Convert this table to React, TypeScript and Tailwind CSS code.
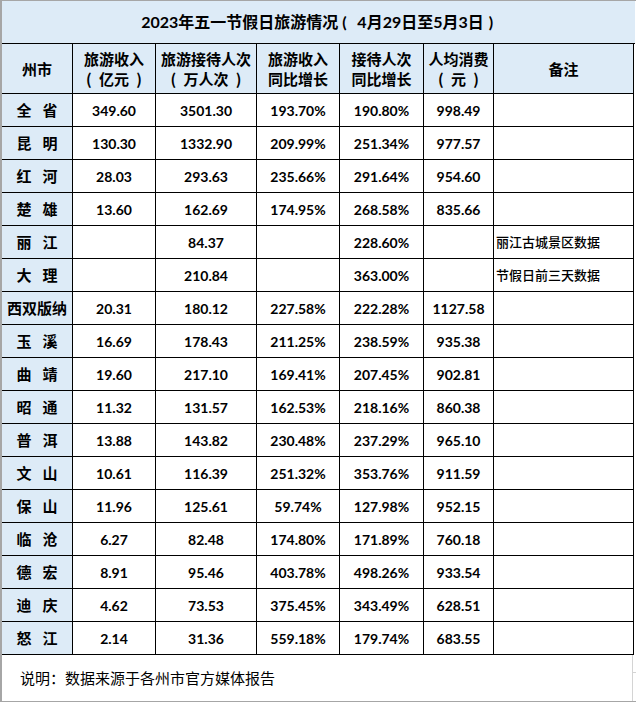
const COLS = "grid grid-cols-[71px_83px_101px_83px_84px_70px_140px]"

type Row = {
  city: string
  income: string
  visitors: string
  incomeYoY: string
  visitorsYoY: string
  perCapita: string
  note: string
}

const ROWS: Row[] = [
  { city: "全省", income: "349.60", visitors: "3501.30", incomeYoY: "193.70%", visitorsYoY: "190.80%", perCapita: "998.49", note: "" },
  { city: "昆明", income: "130.30", visitors: "1332.90", incomeYoY: "209.99%", visitorsYoY: "251.34%", perCapita: "977.57", note: "" },
  { city: "红河", income: "28.03", visitors: "293.63", incomeYoY: "235.66%", visitorsYoY: "291.64%", perCapita: "954.60", note: "" },
  { city: "楚雄", income: "13.60", visitors: "162.69", incomeYoY: "174.95%", visitorsYoY: "268.58%", perCapita: "835.66", note: "" },
  { city: "丽江", income: "", visitors: "84.37", incomeYoY: "", visitorsYoY: "228.60%", perCapita: "", note: "丽江古城景区数据" },
  { city: "大理", income: "", visitors: "210.84", incomeYoY: "", visitorsYoY: "363.00%", perCapita: "", note: "节假日前三天数据" },
  { city: "西双版纳", income: "20.31", visitors: "180.12", incomeYoY: "227.58%", visitorsYoY: "222.28%", perCapita: "1127.58", note: "" },
  { city: "玉溪", income: "16.69", visitors: "178.43", incomeYoY: "211.25%", visitorsYoY: "238.59%", perCapita: "935.38", note: "" },
  { city: "曲靖", income: "19.60", visitors: "217.10", incomeYoY: "169.41%", visitorsYoY: "207.45%", perCapita: "902.81", note: "" },
  { city: "昭通", income: "11.32", visitors: "131.57", incomeYoY: "162.53%", visitorsYoY: "218.16%", perCapita: "860.38", note: "" },
  { city: "普洱", income: "13.88", visitors: "143.82", incomeYoY: "230.48%", visitorsYoY: "237.29%", perCapita: "965.10", note: "" },
  { city: "文山", income: "10.61", visitors: "116.39", incomeYoY: "251.32%", visitorsYoY: "353.76%", perCapita: "911.59", note: "" },
  { city: "保山", income: "11.96", visitors: "125.61", incomeYoY: "59.74%", visitorsYoY: "127.98%", perCapita: "952.15", note: "" },
  { city: "临沧", income: "6.27", visitors: "82.48", incomeYoY: "174.80%", visitorsYoY: "171.89%", perCapita: "760.18", note: "" },
  { city: "德宏", income: "8.91", visitors: "95.46", incomeYoY: "403.78%", visitorsYoY: "498.26%", perCapita: "933.54", note: "" },
  { city: "迪庆", income: "4.62", visitors: "73.53", incomeYoY: "375.45%", visitorsYoY: "343.49%", perCapita: "628.51", note: "" },
  { city: "怒江", income: "2.14", visitors: "31.36", incomeYoY: "559.18%", visitorsYoY: "179.74%", perCapita: "683.55", note: "" },
]

// 全角括号按 Excel 的宽度排版
function Paren({ text }: { text: string }) {
  return (
    <span className="flex items-center">
      <span className="inline-block w-[13px] text-left">(</span>
      <span>{text}</span>
      <span className="inline-block w-[13px] text-right">)</span>
    </span>
  )
}

function HeadCell({ top, bottom }: { top: string; bottom?: React.ReactNode }) {
  return (
    <div className="flex flex-col items-center justify-center border-r border-b border-black bg-[#ddebf7] text-[15px] leading-[20px] font-bold">
      <span>{top}</span>
      {bottom}
    </div>
  )
}

function NumCell({ value }: { value: string }) {
  return (
    <div className="flex items-center justify-center border-r border-b border-black text-[14px] font-bold font-['Lato','Noto_Sans_CJK_SC',sans-serif]">
      {value}
    </div>
  )
}

function CityCell({ name }: { name: string }) {
  // 两字州市名中间留空
  const chars = name.length === 2 ? name.split("") : [name]
  return (
    <div className="flex items-center justify-center gap-[11px] border-r border-b border-black bg-[#ddebf7] text-[15px] font-bold">
      {chars.map((c, i) => (
        <span key={i}>{c}</span>
      ))}
    </div>
  )
}

export default function App() {
  return (
    <div className="relative flex h-[702px] w-[636px] flex-col border-t border-b border-l-2 border-[#a6a6a6] bg-white text-black font-['Noto_Sans_CJK_SC',sans-serif]">
      <div className="flex h-[43px] w-[633px] items-center justify-center border-b border-black bg-[#ddebf7] text-[16px] font-bold font-['Lato','Noto_Sans_CJK_SC',sans-serif]">
        <span>2023年五一节假日旅游情况</span>
        <span className="inline-block w-[19px] pl-[4px]">(</span>
        <span>4月29日至5月3日</span>
        <span className="inline-block w-[12px] pl-[5px]">)</span>
      </div>

      <div className={`${COLS} h-[50px]`}>
        <HeadCell top="州市" />
        <HeadCell top="旅游收入" bottom={<Paren text="亿元" />} />
        <HeadCell top="旅游接待人次" bottom={<Paren text="万人次" />} />
        <HeadCell top="旅游收入" bottom={<span>同比增长</span>} />
        <HeadCell top="接待人次" bottom={<span>同比增长</span>} />
        <HeadCell top="人均消费" bottom={<Paren text="元" />} />
        <HeadCell top="备注" />
      </div>

      {ROWS.map(r => (
        <div key={r.city} className={`${COLS} h-[33px]`}>
          <CityCell name={r.city} />
          <NumCell value={r.income} />
          <NumCell value={r.visitors} />
          <NumCell value={r.incomeYoY} />
          <NumCell value={r.visitorsYoY} />
          <NumCell value={r.perCapita} />
          <div className="flex items-center border-r border-b border-black pl-[2px] text-[13px] font-medium">
            {r.note}
          </div>
        </div>
      ))}

      <div className="relative flex flex-1 items-center pl-[18px] text-[15px]">
        说明：数据来源于各州市官方媒体报告
        <div className="absolute top-0 bottom-0 left-[630px] w-px bg-[#d4d4d4]" />
        <div className="absolute top-[17px] left-[631px] h-px w-[3px] bg-[#d4d4d4]" />
      </div>
    </div>
  )
}
